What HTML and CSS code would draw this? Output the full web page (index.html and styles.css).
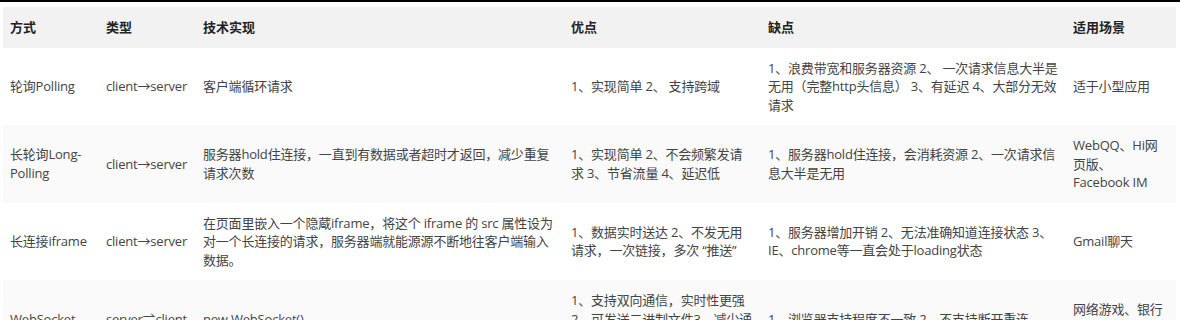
FILE: index.html
```html
<!DOCTYPE html>
<html lang="zh-CN">
<head>
<meta charset="utf-8">
<link rel="stylesheet" href="styles.css">
</head>
<body>
<div class="topbar"></div>
<table class="cmp">
  <colgroup>
    <col class="c1"><col class="c2"><col class="c3"><col class="c4"><col class="c5"><col class="c6">
  </colgroup>
  <thead>
    <tr><th>方式</th><th>类型</th><th>技术实现</th><th>优点</th><th>缺点</th><th>适用场景</th></tr>
  </thead>
  <tbody>
    <tr>
      <td>轮询Polling</td>
      <td>client→server</td>
      <td>客户端循环请求</td>
      <td>1、实现简单 2、 支持跨域</td>
      <td>1、浪费带宽和服务器资源 2、 一次请求信息大半是无用（完整http头信息） 3、有延迟 4、大部分无效请求</td>
      <td>适于小型应用</td>
    </tr>
    <tr>
      <td>长轮询Long-Polling</td>
      <td>client→server</td>
      <td>服务器hold住连接，一直到有数据或者超时才返回，减少重复请求次数</td>
      <td>1、实现简单 2、不会频繁发请求 3、节省流量 4、延迟低</td>
      <td>1、服务器hold住连接，会消耗资源 2、一次请求信息大半是无用</td>
      <td>WebQQ、Hi网页版、Facebook&nbsp;IM</td>
    </tr>
    <tr>
      <td>长连接iframe</td>
      <td>client→server</td>
      <td>在页面里嵌入一个隐蔵iframe，将这个 iframe 的 src 属性设为对一个长连接的请求，服务器端就能源源不断地往客户端输入数据。</td>
      <td>1、数据实时送达 2、不发无用请求，一次链接，多次 “推送”</td>
      <td>1、服务器增加开销 2、无法准确知道连接状态 3、IE、chrome等一直会处于loading状态</td>
      <td>Gmail聊天</td>
    </tr>
    <tr>
      <td>WebSocket</td>
      <td>server⇌client</td>
      <td>new WebSocket()</td>
      <td>1、支持双向通信，实时性更强 2、可发送二进制文件3、减少通信量</td>
      <td>1、浏览器支持程度不一致 2、不支持断开重连</td>
      <td>网络游戏、银行交互和支付</td>
    </tr>
  </tbody>
</table>
</body>
</html>
```
FILE: styles.css
```css
html, body {
  margin: 0;
  padding: 0;
  background: #fff;
}
body {
  font-family: "Open Sans", "Noto Sans CJK SC", sans-serif;
  font-size: 13px;
  color: #444;
}
.topbar {
  height: 2px;
  background: #000;
  margin-bottom: 5px;
}
.cmp {
  margin-left: 3px;
  width: 1173px;
  table-layout: fixed;
  border-collapse: collapse;
}
.c1 { width: 96px; }
.c2 { width: 97px; }
.c3 { width: 368px; }
.c4 { width: 197px; }
.c5 { width: 305px; }
.c6 { width: 110px; }
.cmp th, .cmp td {
  padding: 11px 6px 11px 7px;
  line-height: 18.5px;
  text-align: left;
  vertical-align: middle;
}
.cmp td {
  letter-spacing: -0.2px;
}
.cmp th {
  background: #f2f2f2;
  color: #222;
  font-weight: bold;
}
.cmp tbody tr:nth-child(even) td {
  background: #fafafa;
}
```
